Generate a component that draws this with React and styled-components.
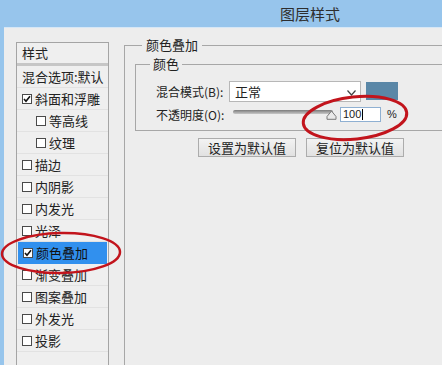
import React from 'react'
import styled, { createGlobalStyle } from 'styled-components'

const Global = createGlobalStyle`
  html, body {
    margin: 0;
    padding: 0;
    overflow: hidden;
    background: #ededed;
  }
`

const cjk = `"Noto Sans CJK SC", "Liberation Sans", sans-serif`

const Window = styled.div`
  position: relative;
  width: 442px;
  height: 365px;
  overflow: hidden;
  display: flex;
  flex-direction: column;
  background: #97c5ec;
  font-family: ${cjk};
  color: #222;
`

const TitleBar = styled.div`
  height: 27px;
  line-height: 27px;
  padding-left: 280px;
  font-size: 15px;
  color: #2e2e2e;
  flex-shrink: 0;
`

const Body = styled.div`
  flex: 1;
  margin-left: 4px;
  border-top: 1px solid #d6e7f6;
  background: #ededed;
  display: flex;
  align-items: flex-start;
  gap: 15px;
  padding: 9px 0 0 12px;
  min-height: 0;
`

const StyleList = styled.div`
  width: 93px;
  box-sizing: border-box;
  flex-shrink: 0;
  margin-top: 5px;
  height: 340px;
  border: 1px solid #a4a4a4;
  background: #efefef;
  font-size: 13px;
`

const ListHeader = styled.div`
  height: 20px;
  line-height: 20px;
  padding-left: 5px;
`

const ListDivider = styled.div`
  height: 3px;
  background: #c6c6c6;
`

const Row = styled.div`
  height: 22px;
  box-sizing: border-box;
  display: flex;
  align-items: center;
  gap: 3px;
  padding-left: ${p => (p.indent ? 19 : 5)}px;
  margin: 0 ${p => (p.selected ? 1 : 0)}px;
  white-space: nowrap;
  background: ${p => (p.selected ? '#3190ee' : 'transparent')};
  color: ${p => (p.selected ? '#fff' : '#222')};
  border-bottom: 1px solid ${p => (p.selected ? '#3190ee' : '#e2e2e2')};
`

const Box = styled.span`
  width: 10px;
  height: 10px;
  box-sizing: border-box;
  border: 1px solid #4a4a4a;
  background: #fff;
  flex-shrink: 0;
  display: flex;
  align-items: center;
  justify-content: center;
`

const Check = ({ on }) => (
  <Box>
    {on && (
      <svg width="8" height="8" viewBox="0 0 8 8">
        <path d="M1 4 L3 6.3 L7 1.3" fill="none" stroke="#111" strokeWidth="1.6" />
      </svg>
    )}
  </Box>
)

const Group = styled.fieldset`
  margin: 0;
  padding: 0;
  min-width: 0;
  border: 1px solid #a7a7a7;
  box-sizing: border-box;
`

const OuterGroup = styled(Group)`
  width: 345px;
  height: 380px;
  flex-shrink: 0;
`

const Legend = styled.legend`
  margin-left: ${p => p.offset}px;
  padding: 0 ${p => p.pad}px;
  font-size: 13px;
  line-height: 16px;
`

const OuterContent = styled.div`
  padding: 3px 0 0 10px;
`

const InnerContent = styled.div`
  padding: 8px 0 4px 20px;
`

const FieldRow = styled.div`
  height: ${p => p.h}px;
  display: flex;
  align-items: center;
`

const Label = styled.span`
  width: 73px;
  font-size: 12px;
  white-space: nowrap;
`

const Select = styled.div`
  width: 132px;
  height: 21px;
  box-sizing: border-box;
  border: 1px solid #b7b7b7;
  background: #fff;
  display: flex;
  align-items: center;
  justify-content: space-between;
  padding: 0 4px 0 5px;
  font-size: 13px;
`

const Chevron = styled.svg`
  align-self: flex-end;
  margin-bottom: 5px;
`

const Swatch = styled.div`
  width: 32px;
  height: 18px;
  margin-left: 5px;
  background: #5a87a7;
`

const Slider = styled.div`
  position: relative;
  width: 104px;
  height: 14px;
  margin-left: 4px;
  padding-top: 3px;
  box-sizing: border-box;
`

const Track = styled.div`
  width: 100px;
  height: 4px;
  border-radius: 2px;
  background: linear-gradient(#7b7b7b, #c8c8c8);
`

const Thumb = styled.svg`
  position: absolute;
  left: 93px;
  top: 3px;
`

const NumberBox = styled.div`
  width: 41px;
  height: 15px;
  margin-left: 3px;
  box-sizing: border-box;
  border: 1px solid #8fb0d2;
  background: #fff;
  display: flex;
  align-items: center;
  padding-left: 2px;
  font-family: "Liberation Sans", sans-serif;
  font-size: 11px;
`

const Caret = styled.span`
  width: 1px;
  height: 11px;
  background: #000;
  margin-left: 1px;
`

const Unit = styled.span`
  margin-left: 6px;
  font-family: "Liberation Sans", sans-serif;
  font-size: 11px;
`

const Buttons = styled.div`
  display: flex;
  gap: 10px;
  margin-top: 7px;
  padding-left: 63px;
`

const Button = styled.button`
  width: 98px;
  height: 19px;
  padding: 0;
  border: 1px solid #acacac;
  background: linear-gradient(#f3f3f3, #e1e1e1);
  font-family: ${cjk};
  font-size: 13px;
  line-height: 17px;
  color: #222;
`

const Marks = styled.svg`
  position: absolute;
  left: 0;
  top: 0;
  pointer-events: none;
`

const styles = [
  { name: '斜面和浮雕', on: true },
  { name: '等高线', indent: true },
  { name: '纹理', indent: true },
  { name: '描边' },
  { name: '内阴影' },
  { name: '内发光' },
  { name: '光泽' },
  { name: '颜色叠加', on: true, selected: true },
  { name: '渐变叠加' },
  { name: '图案叠加' },
  { name: '外发光' },
  { name: '投影' },
]

export default function App() {
  return (
    <Window>
      <Global />
      <TitleBar>图层样式</TitleBar>
      <Body>
        <StyleList>
          <ListHeader>样式</ListHeader>
          <ListDivider />
          <Row>混合选项:默认</Row>
          {styles.map(s => (
            <Row key={s.name} indent={s.indent} selected={s.selected}>
              <Check on={s.on} />
              <span style={{ color: s.selected ? '#111' : undefined }}>{s.name}</span>
            </Row>
          ))}
        </StyleList>

        <OuterGroup>
          <Legend offset={17} pad={4}>颜色叠加</Legend>
          <OuterContent>
            <Group>
              <Legend offset={14} pad={3}>颜色</Legend>
              <InnerContent>
                <FieldRow h={22}>
                  <Label>混合模式(B):</Label>
                  <Select>
                    正常
                    <Chevron width="9" height="6" viewBox="0 0 9 6">
                      <path d="M0.5 0.5 L4.5 5 L8.5 0.5" fill="none" stroke="#444" strokeWidth="1.2" />
                    </Chevron>
                  </Select>
                  <Swatch />
                </FieldRow>
                <FieldRow h={24}>
                  <Label>不透明度(O):</Label>
                  <Slider>
                    <Track />
                    <Thumb width="11" height="10" viewBox="0 0 11 10">
                      <path d="M1 9.3 L1 6.5 L5.5 1 L10 6.5 L10 9.3 Z" fill="#e9e9e9" stroke="#7a7a7a" strokeWidth="1" />
                    </Thumb>
                  </Slider>
                  <NumberBox>
                    100<Caret />
                  </NumberBox>
                  <Unit>%</Unit>
                </FieldRow>
              </InnerContent>
            </Group>
            <Buttons>
              <Button>设置为默认值</Button>
              <Button>复位为默认值</Button>
            </Buttons>
          </OuterContent>
        </OuterGroup>
      </Body>

      <Marks width="442" height="365">
        <ellipse cx="61" cy="253" rx="59" ry="20" fill="none" stroke="#c2141c" strokeWidth="2.5" transform="rotate(-1 61 253)" />
        <ellipse cx="355" cy="118" rx="52" ry="21" fill="none" stroke="#c2141c" strokeWidth="3" transform="rotate(-6 355 118)" />
      </Marks>
    </Window>
  )
}
